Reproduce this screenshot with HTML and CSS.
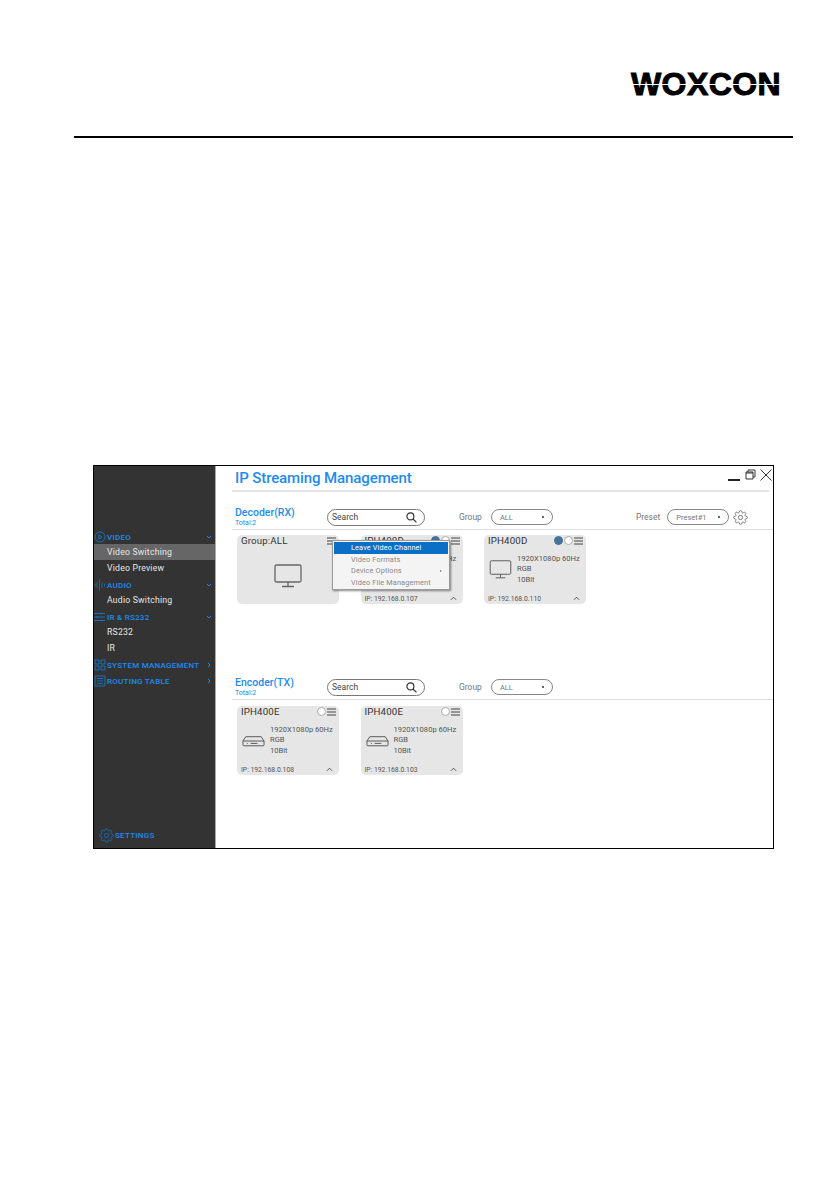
FILE: index.html
```html
<!DOCTYPE html>
<html lang="en">
<head>
<meta charset="utf-8">
<title>WOXCON IP Streaming Management</title>
<link rel="stylesheet" href="styles.css">
</head>
<body>
<svg class="defs" width="0" height="0" aria-hidden="true">
  <symbol id="gear" viewBox="0 0 24 24"><circle cx="12" cy="12" r="3.4"/><path d="M19.4 15a1.65 1.65 0 0 0 .33 1.82l.06.06a2 2 0 0 1 0 2.83 2 2 0 0 1-2.83 0l-.06-.06a1.65 1.65 0 0 0-1.82-.33 1.65 1.65 0 0 0-1 1.51V21a2 2 0 0 1-2 2 2 2 0 0 1-2-2v-.09A1.65 1.65 0 0 0 9 19.4a1.65 1.65 0 0 0-1.82.33l-.06.06a2 2 0 0 1-2.83 0 2 2 0 0 1 0-2.83l.06-.06a1.65 1.65 0 0 0 .33-1.82 1.65 1.65 0 0 0-1.51-1H3a2 2 0 0 1-2-2 2 2 0 0 1 2-2h.09A1.65 1.65 0 0 0 4.6 9a1.65 1.65 0 0 0-.33-1.82l-.06-.06a2 2 0 0 1 0-2.83 2 2 0 0 1 2.83 0l.06.06a1.65 1.65 0 0 0 1.82.33H9a1.65 1.65 0 0 0 1-1.51V3a2 2 0 0 1 2-2 2 2 0 0 1 2 2v.09a1.65 1.65 0 0 0 1 1.51 1.65 1.65 0 0 0 1.82-.33l.06-.06a2 2 0 0 1 2.83 0 2 2 0 0 1 0 2.83l-.06.06a1.65 1.65 0 0 0-.33 1.82V9a1.65 1.65 0 0 0 1.51 1H21a2 2 0 0 1 2 2 2 2 0 0 1-2 2h-.09a1.65 1.65 0 0 0-1.51 1z"/></symbol>
  <symbol id="monitor" viewBox="0 0 28 24"><rect x="1" y="1" width="26" height="17" rx="1.5"/><path d="M14 18v4M8 22.500h12"/></symbol>
  <symbol id="box" viewBox="0 0 24 12"><path d="M1 6 4 1.500h16L23 6v4a1 1 0 0 1-1 1H2a1 1 0 0 1-1-1zM1 6h22M5 8.500h1M9 8.500h7"/></symbol>
  <symbol id="menu" viewBox="0 0 9 8"><path d="M0 1h9M0 4h9M0 7h9"/></symbol>
  <symbol id="search" viewBox="0 0 12 12"><circle cx="4.800" cy="4.800" r="3.800"/><path d="m7.600 7.600 3.800 3.800"/></symbol>
  <symbol id="up" viewBox="0 0 8 5"><path d="m1 4 3-3 3 3"/></symbol>
</svg>

<header class="doc-head">
  <div class="logo"><span class="logo-text">WOXCON</span><span class="logo-cut"></span></div>
  <div class="doc-rule"></div>
</header>

<main class="window">
  <nav class="side">
    <div class="nav-head"><svg class="nav-ico" viewBox="0 0 12 12"><circle cx="6" cy="6" r="5"/><path d="M4.800 3.800 8 6 4.800 8.200z"/></svg><span class="nav-label">VIDEO</span><svg class="nav-arrow" viewBox="0 0 6 6"><path d="m1 2 2 2 2-2"/></svg></div>
    <div class="nav-item nav-item-on">Video Switching</div>
    <div class="nav-item">Video Preview</div>
    <div class="nav-head"><svg class="nav-ico nav-ico-thin" viewBox="0 0 12 12"><path d="M1 4.500v3M3 3v6M5.500.500v11M8 3v6M10.500 4.500v3"/></svg><span class="nav-label">AUDIO</span><svg class="nav-arrow" viewBox="0 0 6 6"><path d="m1 2 2 2 2-2"/></svg></div>
    <div class="nav-item">Audio Switching</div>
    <div class="nav-head"><svg class="nav-ico" viewBox="0 0 12 12"><path d="M0 2.500h11M0 6h11M0 9.500h11M7 1.500v2M3 5v2M8 8.500v2"/></svg><span class="nav-label">IR &amp; RS232</span><svg class="nav-arrow" viewBox="0 0 6 6"><path d="m1 2 2 2 2-2"/></svg></div>
    <div class="nav-item">RS232</div>
    <div class="nav-item">IR</div>
    <div class="nav-head"><svg class="nav-ico" viewBox="0 0 12 12"><path d="M1 1h4v4H1zM7 1h4v4H7zM1 7h4v4H1zM7 7h4v4H7z"/></svg><span class="nav-label">SYSTEM MANAGEMENT</span><svg class="nav-arrow" viewBox="0 0 6 6"><path d="m2 1 2 2-2 2"/></svg></div>
    <div class="nav-head"><svg class="nav-ico" viewBox="0 0 12 12"><path d="M1 1h10v10H1zM3 3.500h6M3 6h6M3 8.500h6"/></svg><span class="nav-label">ROUTING TABLE</span><svg class="nav-arrow" viewBox="0 0 6 6"><path d="m2 1 2 2-2 2"/></svg></div>
    <div class="nav-settings"><svg class="settings-ico"><use href="#gear"/></svg><span class="nav-label">SETTINGS</span></div>
  </nav>

  <section class="content">
    <div class="title-row">
      <h1 class="title">IP Streaming Management</h1>
      <div class="win-ctrl">
        <span class="win-min"></span>
        <svg class="win-ico" viewBox="0 0 11 11"><path d="M3 3V1h7v7H8M1 3h7v7H1zM1 4h7"/></svg>
        <svg class="win-close" viewBox="0 0 12 12"><path d="m.500.500 11 11M11.500.500l-11 11"/></svg>
      </div>
    </div>

    <div class="sec-head">
      <div class="sec-title"><h2 class="sec-name">Decoder(RX)</h2><div class="sec-total">Total:2</div></div>
      <div class="search"><span>Search</span><svg class="search-ico"><use href="#search"/></svg></div>
      <span class="field-label">Group</span>
      <div class="select"><span>ALL</span><i class="dot"></i></div>
      <span class="field-label preset-label">Preset</span>
      <div class="select select-preset"><span>Preset#1</span><i class="dot"></i></div>
      <svg class="preset-gear"><use href="#gear"/></svg>
    </div>

    <div class="cards cards-rx">
      <article class="card">
        <div class="card-top"><span class="card-name">Group:ALL</span><svg class="ham"><use href="#menu"/></svg></div>
        <div class="group-body"><svg class="mon-big"><use href="#monitor"/></svg></div>
      </article>
      <article class="card">
        <div class="card-top"><span class="card-name">IPH400D</span><i class="led led-on"></i><i class="led"></i><svg class="ham"><use href="#menu"/></svg></div>
        <div class="card-body"><svg class="mon"><use href="#monitor"/></svg><div class="spec"><div>1920X1080p 60Hz</div><div>RGB</div><div>10Bit</div></div></div>
        <div class="card-foot"><span>IP: 192.168.0.107</span><svg class="up"><use href="#up"/></svg></div>
      </article>
      <article class="card">
        <div class="card-top"><span class="card-name">IPH400D</span><i class="led led-on"></i><i class="led"></i><svg class="ham"><use href="#menu"/></svg></div>
        <div class="card-body"><svg class="mon"><use href="#monitor"/></svg><div class="spec"><div>1920X1080p 60Hz</div><div>RGB</div><div>10Bit</div></div></div>
        <div class="card-foot"><span>IP: 192.168.0.110</span><svg class="up"><use href="#up"/></svg></div>
      </article>
      <div class="ctx">
        <div class="ctx-item ctx-on">Leave Video Channel</div>
        <div class="ctx-item">Video Formats</div>
        <div class="ctx-item ctx-sub">Device Options<i class="ctx-arrow"></i></div>
        <div class="ctx-item">Video File Management</div>
      </div>
    </div>

    <div class="sec-head">
      <div class="sec-title"><h2 class="sec-name">Encoder(TX)</h2><div class="sec-total">Total:2</div></div>
      <div class="search"><span>Search</span><svg class="search-ico"><use href="#search"/></svg></div>
      <span class="field-label">Group</span>
      <div class="select"><span>ALL</span><i class="dot"></i></div>
    </div>

    <div class="cards cards-tx">
      <article class="card">
        <div class="card-top"><span class="card-name">IPH400E</span><i class="led"></i><svg class="ham"><use href="#menu"/></svg></div>
        <div class="card-body"><svg class="enc"><use href="#box"/></svg><div class="spec"><div>1920X1080p 60Hz</div><div>RGB</div><div>10Bit</div></div></div>
        <div class="card-foot"><span>IP: 192.168.0.108</span><svg class="up"><use href="#up"/></svg></div>
      </article>
      <article class="card">
        <div class="card-top"><span class="card-name">IPH400E</span><i class="led"></i><svg class="ham"><use href="#menu"/></svg></div>
        <div class="card-body"><svg class="enc"><use href="#box"/></svg><div class="spec"><div>1920X1080p 60Hz</div><div>RGB</div><div>10Bit</div></div></div>
        <div class="card-foot"><span>IP: 192.168.0.103</span><svg class="up"><use href="#up"/></svg></div>
      </article>
    </div>
  </section>
</main>
</body>
</html>
```

FILE: styles.css
```css
* { box-sizing: border-box; }
html, body { margin: 0; padding: 0; }
body {
  width: 840px;
  height: 1192px;
  overflow: hidden;
  background: #fff;
  font-family: Roboto, "Liberation Sans", sans-serif;
  color: #444;
}
.defs { position: absolute; }

/* document header */
.doc-head { padding: 66px 47px 0 74px; }
.logo { position: relative; width: 150px; height: 36px; margin-left: auto; margin-right: 12px; }
.logo-text {
  display: block;
  font: 700 32px/36px "Liberation Sans", sans-serif;
  letter-spacing: .4px;
  -webkit-text-stroke: 1px #000;
  color: #000;
  white-space: nowrap;
}
.logo-cut { position: absolute; left: 0; right: -4px; top: 18px; height: 1px; background: #fff; }
.doc-rule { height: 2px; background: #000; margin-top: 34px; }

/* application window */
.window {
  display: flex;
  width: 681px;
  height: 384px;
  margin: 327px 0 0 93px;
  border: 1px solid #000;
  background: #fff;
}
.side {
  display: flex;
  flex-direction: column;
  flex: 0 0 122px;
  padding-top: 63px;
  background: #333;
  border-right: 1px solid #aaa;
}
.nav-head {
  display: flex;
  align-items: center;
  height: 16px;
  padding-right: 3px;
  color: #1d8cf0;
}
.nav-item + .nav-head { margin-top: 1px; }
.nav-head + .nav-item { margin-top: -1px; }
.nav-ico { flex: 0 0 12px; width: 12px; height: 12px; fill: none; stroke: #1670bd; stroke-width: 1; }
.nav-ico-thin { stroke-width: .8; }
.nav-label { margin-left: 1px; font-size: 8px; font-weight: 500; letter-spacing: .25px; white-space: nowrap; flex: 1; }
.nav-arrow { flex: 0 0 6px; width: 6px; height: 6px; fill: none; stroke: #1d8cf0; stroke-width: 1; }
.nav-item {
  height: 16px;
  padding-left: 13px;
  font-size: 8.700px;
  line-height: 16px;
  letter-spacing: .2px;
  color: #e6e6e6;
}
.nav-item-on { background: #666; }
.nav-settings { display: flex; align-items: center; margin-top: auto; margin-bottom: 5px; padding-left: 5px; color: #1d8cf0; }
.settings-ico { width: 15px; height: 15px; fill: none; stroke: #1670bd; stroke-width: 1.500; }

/* content */
.content { flex: 1; min-width: 0; padding-left: 16px; display: flex; flex-direction: column; }
.title-row {
  display: flex;
  justify-content: space-between;
  height: 26px;
  margin-right: 4px;
  border-bottom: 2px solid #e4e4e4;
}
.title { margin: 0 0 0 3px; font-size: 15px; line-height: 25px; font-weight: 500; letter-spacing: -.1px; color: #1d8cf0; white-space: nowrap; }
.win-ctrl { display: flex; align-items: flex-start; gap: 5px; margin-right: -4px; padding-top: 3px; }
.win-min { width: 12px; height: 2px; margin-top: 10px; background: #222; }
.win-ico { width: 11px; height: 11px; fill: none; stroke: #333; stroke-width: 1; }
.win-close { width: 12px; height: 12px; fill: none; stroke: #333; stroke-width: 1; margin: 0 1px 0 -1px; }

.sec-head { display: flex; align-items: center; height: 38px; padding: 13px 0 0 3px; border-bottom: 1px solid #ddd; }
.sec-title { flex: 0 0 92px; line-height: 1; }
.sec-name { margin: 0; font-size: 10.500px; line-height: 12px; font-weight: 500; color: #1d8cf0; white-space: nowrap; }
.sec-total { font-size: 7px; line-height: 8px; color: #1d8cf0; }
.search {
  display: flex; align-items: center; justify-content: space-between;
  width: 98px; height: 17px; padding: 0 7px 0 4px;
  border: 1px solid #777; border-radius: 9px;
  font-size: 8.500px; color: #444;
}
.search-ico { width: 11px; height: 11px; fill: none; stroke: #333; stroke-width: 1.300; }
.field-label { margin-left: 34px; font-size: 8.500px; color: #777; }
.select {
  display: flex; align-items: center; justify-content: space-between;
  width: 62px; height: 16px; margin-left: 9px; padding: 0 8px;
  border: 1px solid #888; border-radius: 9px;
  font-size: 7.500px; color: #777;
}
.dot { width: 2px; height: 2px; border-radius: 50%; background: #333; }
.preset-label { margin-left: 83px; }
.select-preset { margin-left: 7px; }
.preset-gear { width: 15px; height: 15px; margin-left: 4px; fill: none; stroke: #555; stroke-width: 1.200; }

.cards { position: relative; display: flex; gap: 21.500px; }
.cards-rx { height: 132px; padding: 5px 0 0 5px; }
.cards-tx { padding: 6px 0 0 5px; }
.card {
  display: flex; flex-direction: column;
  width: 102px; height: 69px; padding: 0 3px 0 4px;
  border-radius: 5px; background: #e6e6e6;
}
.card-top { display: flex; align-items: center; height: 11px; gap: 1px; }
.card-name { flex: 1; font-size: 9.700px; font-weight: 400; letter-spacing: .15px; color: #333; white-space: nowrap; }
.led { flex: 0 0 9px; width: 9px; height: 9px; border: 1px solid #aaa; border-radius: 50%; background: #fff; }
.led-on { background: #45719d; border-color: #45719d; }
.ham { flex: 0 0 9px; width: 9px; height: 8px; fill: none; stroke: #444; stroke-width: 1; }
.card-body { display: flex; align-items: center; flex: 1; gap: 5px; padding-left: 1px; }
.mon { flex: 0 0 23px; width: 23px; height: 19px; fill: none; stroke: #555; stroke-width: 1.200; }
.enc { flex: 0 0 23px; width: 23px; height: 12px; fill: none; stroke: #555; stroke-width: 1; }
.spec { font-size: 7.600px; line-height: 10.500px; color: #555; white-space: nowrap; }
.card-foot { display: flex; align-items: center; justify-content: space-between; height: 11px; padding-right: 3px; font-size: 6.800px; color: #555; }
.up { width: 7px; height: 5px; fill: none; stroke: #444; stroke-width: 1; }
.group-body { display: flex; align-items: center; justify-content: center; flex: 1; padding: 2px 1px 0 0; }
.mon-big { width: 28px; height: 24px; fill: none; stroke: #666; stroke-width: 1.300; }

.ctx {
  position: absolute; left: 100px; top: 10px;
  width: 118px; height: 50px; padding: 1px;
  background: #f4f4f4; border: 1px solid #999;
  box-shadow: 1px 1px 2px rgba(0,0,0,.45);
}
.ctx-item { height: 11.700px; padding-left: 17px; font-size: 7.300px; line-height: 11.700px; letter-spacing: .15px; color: #888; white-space: nowrap; }
.ctx-on { background: #0b6fc6; color: #fff; }
.ctx-sub { position: relative; }
.ctx-arrow {
  position: absolute; right: 6px; top: 5px;
  border-left: 2px solid #777; border-top: 1.500px solid transparent; border-bottom: 1.500px solid transparent;
}
```
